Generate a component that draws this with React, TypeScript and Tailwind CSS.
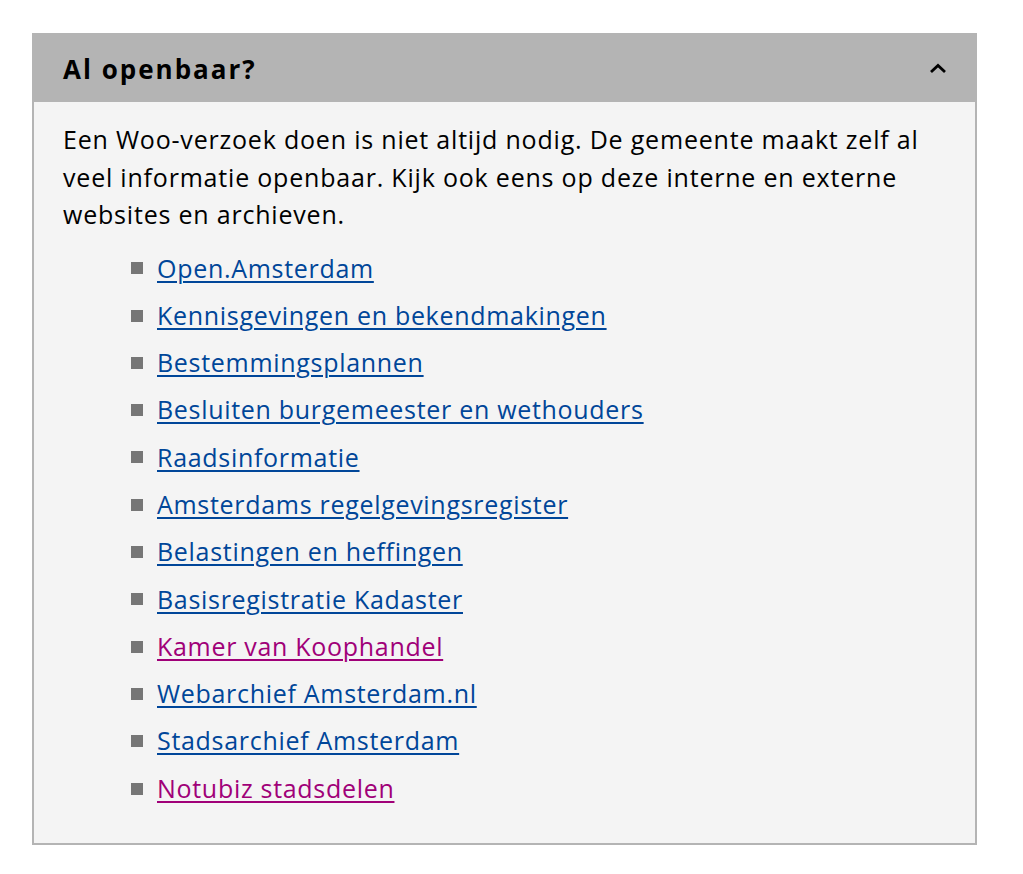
import React from "react";

const links: { label: string; visited?: boolean }[] = [
  { label: "Open.Amsterdam" },
  { label: "Kennisgevingen en bekendmakingen" },
  { label: "Bestemmingsplannen" },
  { label: "Besluiten burgemeester en wethouders" },
  { label: "Raadsinformatie" },
  { label: "Amsterdams regelgevingsregister" },
  { label: "Belastingen en heffingen" },
  { label: "Basisregistratie Kadaster" },
  { label: "Kamer van Koophandel", visited: true },
  { label: "Webarchief Amsterdam.nl" },
  { label: "Stadsarchief Amsterdam" },
  { label: "Notubiz stadsdelen", visited: true },
];

export default function App() {
  return (
    <div className="min-h-[874px] bg-white pt-[33px] pl-[32px] pr-[46px]" style={{ fontFamily: '"Open Sans", sans-serif' }}>
      <div className="w-[945px] border-2 border-[#b4b4b4] bg-[#f4f4f4]">
        <div className="flex h-[67px] items-center justify-between bg-[#b4b4b4] pl-[29px] pr-[28px]">
          <h2 className="text-[26px] font-bold leading-none tracking-[2px] text-black">Al openbaar?</h2>
          <svg width="18" height="11" viewBox="0 0 18 11" fill="none">
            <path d="M2 9 L9 2.5 L16 9" stroke="#000" strokeWidth="2.8" />
          </svg>
        </div>
        <div className="pl-[29px] pr-[30px] pt-[19px] pb-[36px]">
          <p className="text-[25px] leading-[37.5px] tracking-[0.8px] text-black">
            Een Woo-verzoek doen is niet altijd nodig. De gemeente maakt zelf al veel informatie openbaar. Kijk ook eens op deze interne en externe websites en archieven.
          </p>
          <ul className="mt-[16px] flex flex-col gap-[9.8px] pl-[68px]">
            {links.map((l) => (
              <li key={l.label} className="flex items-center gap-[14px] text-[25px] leading-[37.5px] tracking-[0.7px]">
                <span className="h-[12px] w-[12px] shrink-0 bg-[#767676]" />
                <a
                  href="#"
                  className={`underline decoration-2 underline-offset-[3px] ${l.visited ? "text-[#a00078]" : "text-[#004699]"}`}
                >
                  {l.label}
                </a>
              </li>
            ))}
          </ul>
        </div>
      </div>
    </div>
  );
}
